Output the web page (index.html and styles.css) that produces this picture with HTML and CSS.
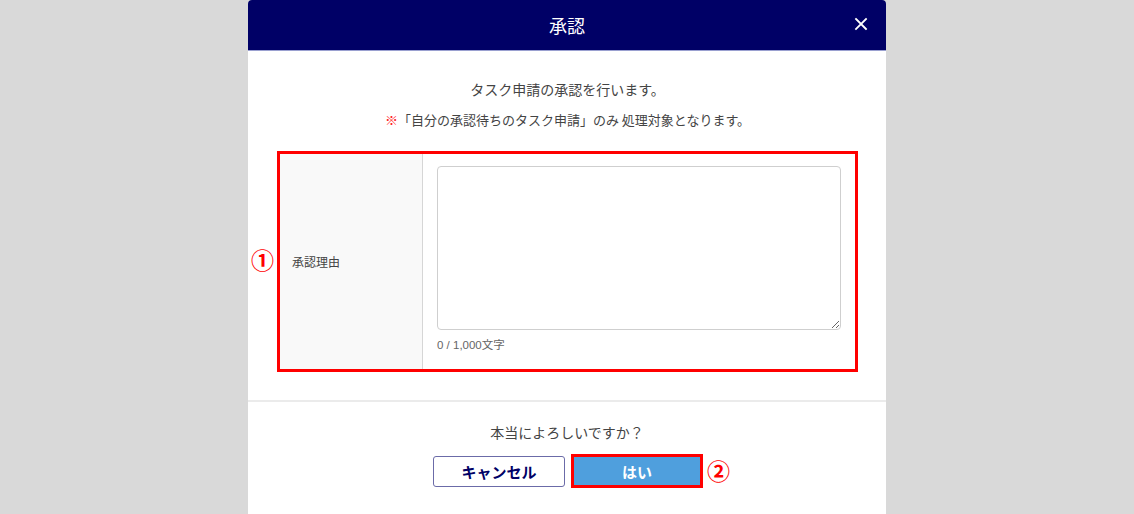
FILE: index.html
```html
<!DOCTYPE html>
<html lang="ja">
<head>
<meta charset="utf-8">
<link rel="stylesheet" href="styles.css">
</head>
<body>
<div class="modal">
  <div class="modal-header">
    <h1 class="modal-title">承認</h1>
    <button class="close" aria-label="close">
      <svg width="14" height="14" viewBox="0 0 14 14"><path d="M2 2 L12 12 M12 2 L2 12" stroke="#fff" stroke-width="1.8" stroke-linecap="square"/></svg>
    </button>
  </div>
  <div class="modal-body">
    <p class="lead">タスク申請の承認を行います。</p>
    <p class="note"><span class="mark">※</span>「自分の承認待ちのタスク申請」のみ 処理対象となります。</p>
    <div class="form-box">
      <span class="badge badge-1">①</span>
      <div class="label-cell">承認理由</div>
      <div class="input-cell">
        <textarea class="reason"></textarea>
        <div class="counter">0 / 1,000文字</div>
      </div>
    </div>
  </div>
  <div class="modal-footer">
    <p class="confirm">本当によろしいですか？</p>
    <div class="buttons">
      <button class="btn btn-cancel">キャンセル</button>
      <div class="ok-wrap">
        <button class="btn btn-ok">はい</button>
        <span class="badge badge-2">②</span>
      </div>
    </div>
  </div>
</div>
</body>
</html>
```

FILE: styles.css
```css
* { box-sizing: border-box; }
html, body { margin: 0; padding: 0; }
body {
  background: #d9d9d9;
  font-family: "Noto Sans CJK JP", "Noto Sans", sans-serif;
  height: 514px;
  overflow: hidden;
}
.modal {
  width: 638px;
  margin: 0 auto;
  background: #fff;
  border-radius: 4px 4px 0 0;
  height: 520px;
}
.modal-header {
  height: 51px;
  background: #000066;
  border-radius: 4px 4px 0 0;
  border-bottom: 1px solid #9aa0d0;
  display: flex;
  align-items: center;
  justify-content: center;
  position: relative;
}
.modal-title {
  margin: 0;
  color: #fff;
  font-size: 18px;
  font-weight: normal;
  line-height: 1;
  padding-bottom: 1px;
}
.close {
  position: absolute;
  right: 18px;
  top: 17px;
  background: none;
  border: 0;
  padding: 0;
  width: 14px;
  height: 14px;
  display: flex;
}
.modal-body {
  padding: 27px 28px 28px 29px;
  border-bottom: 2px solid #ebebeb;
}
.lead {
  margin: 0;
  text-align: center;
  font-size: 14px;
  line-height: 22px;
  color: #444;
}
.note {
  margin: 10px 0 0;
  text-align: center;
  font-size: 13px;
  line-height: 20px;
  color: #444;
}
.mark { color: #ff1a1a; }
.form-box {
  margin-top: 21px;
  border: 3px solid #ff0000;
  display: flex;
  height: 221px;
  position: relative;
}
.badge {
  position: absolute;
  color: #ff0000;
  font-weight: bold;
  font-size: 23px;
  line-height: 1;
}
.badge-1 { left: -29px; top: 94px; }
.label-cell {
  width: 143px;
  background: #f9f9f9;
  border-right: 1px solid #d6d6d6;
  display: flex;
  align-items: center;
  padding-left: 12px;
  font-size: 12px;
  color: #444;
}
.input-cell {
  flex: 1;
  padding: 12px 14px 0 14px;
}
.reason {
  display: block;
  width: 100%;
  height: 164px;
  border: 1px solid #cfcfcf;
  border-radius: 4px;
  resize: vertical;
  margin: 0;
}
.counter {
  margin-top: 7px;
  font-size: 11.5px;
  color: #666;
  line-height: 16px;
  font-family: "Liberation Sans", "Noto Sans CJK JP", sans-serif;
}
.modal-footer {
  padding-top: 19px;
}
.confirm {
  margin: 0;
  text-align: center;
  font-size: 14px;
  line-height: 22px;
  color: #444;
}
.buttons {
  margin-top: 11px;
  display: flex;
  justify-content: center;
  align-items: center;
  gap: 6px;
  padding-left: 2px;
}
.btn {
  font-family: "Noto Sans CJK JP", sans-serif;
  font-weight: bold;
  font-size: 15px;
  border-radius: 3px;
  margin: 0;
  padding: 0;
}
.btn-cancel {
  width: 132px;
  height: 31px;
  background: #fff;
  color: #000066;
  border: 1.5px solid #6b6ba8;
}
.ok-wrap { position: relative; display: flex; }
.btn-ok {
  width: 132px;
  height: 34px;
  background: #4f9fdd;
  color: #fff;
  border: 3px solid #ff0000;
  border-radius: 0;
}
.badge-2 { left: 136px; top: 5px; }
```
